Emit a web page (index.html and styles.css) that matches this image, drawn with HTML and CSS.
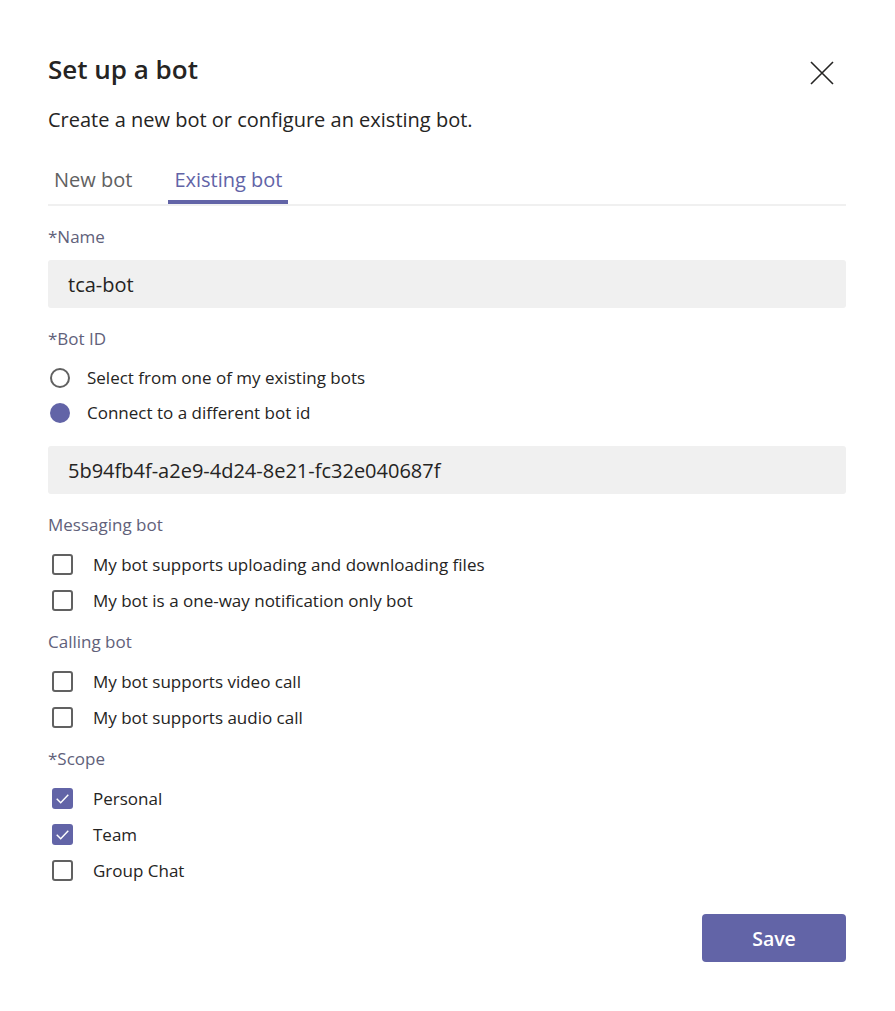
FILE: index.html
```html
<!DOCTYPE html>
<html lang="en">
<head>
<meta charset="utf-8">
<title>Set up a bot</title>
<link rel="stylesheet" href="styles.css">
</head>
<body>
<div class="dialog">
  <div class="header">
    <h1 class="title">Set up a bot</h1>
    <button class="close" aria-label="Close">
      <svg width="24" height="24" viewBox="0 0 24 24"><path d="M1 1 L23 23 M23 1 L1 23" stroke="#252423" stroke-width="1.6" fill="none"/></svg>
    </button>
  </div>
  <p class="subtitle">Create a new bot or configure an existing bot.</p>
  <div class="tabs">
    <div class="tab">New bot</div>
    <div class="tab active">Existing bot</div>
  </div>

  <div class="label first">*Name</div>
  <div class="input">tca-bot</div>

  <div class="label">*Bot ID</div>
  <div class="options">
    <div class="row"><span class="radio"></span><span>Select from one of my existing bots</span></div>
    <div class="row"><span class="radio on"></span><span>Connect to a different bot id</span></div>
  </div>
  <div class="input spaced">5b94fb4f-a2e9-4d24-8e21-fc32e040687f</div>

  <div class="label">Messaging bot</div>
  <div class="checks">
    <div class="crow"><span class="box"></span><span>My bot supports uploading and downloading files</span></div>
    <div class="crow"><span class="box"></span><span>My bot is a one-way notification only bot</span></div>
  </div>

  <div class="label after-checks">Calling bot</div>
  <div class="checks">
    <div class="crow"><span class="box"></span><span>My bot supports video call</span></div>
    <div class="crow"><span class="box"></span><span>My bot supports audio call</span></div>
  </div>

  <div class="label after-checks">*Scope</div>
  <div class="checks">
    <div class="crow"><span class="box on"><svg width="21" height="21" viewBox="0 0 20 20"><path d="M4.5 10.2 L8.3 14 L15.5 6.5" stroke="#fff" stroke-width="1.4" fill="none"/></svg></span><span>Personal</span></div>
    <div class="crow"><span class="box on"><svg width="21" height="21" viewBox="0 0 20 20"><path d="M4.5 10.2 L8.3 14 L15.5 6.5" stroke="#fff" stroke-width="1.4" fill="none"/></svg></span><span>Team</span></div>
    <div class="crow"><span class="box"></span><span>Group Chat</span></div>
  </div>

  <div class="footer">
    <button class="save">Save</button>
  </div>
</div>
</body>
</html>
```
FILE: styles.css
```css
html, body {
  margin: 0;
  padding: 0;
  background: #ffffff;
}
body {
  font-family: "Open Sans", "Noto Sans", sans-serif;
  color: #252423;
}
.dialog {
  padding: 53px 49px 0 48px;
}
.header {
  display: flex;
  justify-content: space-between;
  align-items: flex-start;
}
.title {
  margin: 0;
  font-size: 26px;
  line-height: 32px;
  font-weight: 600;
  color: #252423;
}
.close {
  border: none;
  background: none;
  padding: 0;
  margin: 8px 12px 0 0;
  width: 24px;
  height: 24px;
  display: flex;
}
.subtitle {
  margin: 23px 0 0 0;
  font-size: 20px;
  line-height: 24px;
  color: #252423;
}
.tabs {
  display: flex;
  gap: 30px;
  margin-top: 28px;
  border-bottom: 2px solid #f0f0f0;
}
.tab {
  font-size: 20px;
  line-height: 24px;
  padding: 8px 6px 8px;
  border-bottom: 4px solid transparent;
  color: #616161;
}
.tab.active {
  color: #6264a7;
  border-bottom-color: #6264a7;
}
.label {
  font-size: 17px;
  line-height: 22px;
  color: #61617a;
  margin-top: 20px;
}
.label.after-checks {
  margin-top: 13px;
}
.input {
  margin-top: 12px;
  height: 48px;
  box-sizing: border-box;
  background: #f0f0f0;
  border-radius: 3px;
  padding: 0 20px;
  display: flex;
  align-items: center;
  font-size: 20px;
  color: #252423;
}
.input.spaced {
  margin-top: 16px;
}
.options {
  margin-top: 10px;
}
.row {
  height: 35px;
  display: flex;
  align-items: center;
  font-size: 17px;
  color: #252423;
}
.radio {
  width: 20px;
  height: 20px;
  box-sizing: border-box;
  border: 2px solid #616161;
  border-radius: 50%;
  margin: 0 17px 0 2px;
}
.radio.on {
  border: none;
  background: #6264a7;
}
.checks {
  margin-top: 10px;
}
.crow {
  height: 36px;
  display: flex;
  align-items: center;
  font-size: 17px;
  color: #252423;
}
.box {
  width: 21px;
  height: 21px;
  box-sizing: border-box;
  border: 2px solid #616161;
  border-radius: 3px;
  margin: 0 20px 0 4px;
  display: flex;
  align-items: center;
  justify-content: center;
}
.box.on {
  border: none;
  background: #6264a7;
}
.footer {
  display: flex;
  justify-content: flex-end;
  margin-top: 26px;
}
.save {
  width: 144px;
  height: 48px;
  border: none;
  border-radius: 4px;
  background: #6264a7;
  color: #ffffff;
  font-family: "Open Sans", "Noto Sans", sans-serif;
  font-size: 19.5px;
  font-weight: 600;
}
```
